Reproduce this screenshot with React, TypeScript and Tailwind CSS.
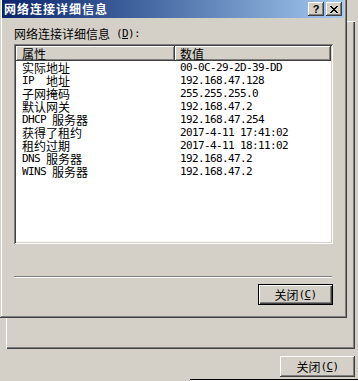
const raised =
  "shadow-[inset_-1px_-1px_#404040,inset_1px_1px_#ffffff,inset_-2px_-2px_#808080,inset_2px_2px_#d4d0c8]";

const rows: [string, string][] = [
  ["实际地址", "00-0C-29-2D-39-DD"],
  ["IP  地址", "192.168.47.128"],
  ["子网掩码", "255.255.255.0"],
  ["默认网关", "192.168.47.2"],
  ["DHCP 服务器", "192.168.47.254"],
  ["获得了租约", "2017-4-11 17:41:02"],
  ["租约过期", "2017-4-11 18:11:02"],
  ["DNS 服务器", "192.168.47.2"],
  ["WINS 服务器", "192.168.47.2"],
];

// SimSun-ish: latin half width (6px), CJK full width (12px)
function Mixed({ text }: { text: string }) {
  const parts = text.split(/([\x00-\x7f]+)/).filter((p) => p !== "");
  return (
    <>
      {parts.map((p, i) =>
        /^[\x00-\x7f]+$/.test(p) ? (
          <span
            key={i}
            className="inline-block align-top h-[13px] leading-[13px] font-['DejaVu_Sans_Mono',monospace] text-[11px] tracking-[-0.62px] whitespace-pre"
          >
            {p}
          </span>
        ) : (
          <span
            key={i}
            className="inline-block align-top h-[13px] leading-[13px] font-['Noto_Sans_CJK_SC',sans-serif] text-[12px]"
          >
            {p}
          </span>
        )
      )}
    </>
  );
}

function Latin({ children }: { children: React.ReactNode }) {
  return (
    <span className="inline-block align-top h-[13px] leading-[13px] font-['DejaVu_Sans_Mono',monospace] text-[11px] tracking-[-0.62px] whitespace-pre">
      {children}
    </span>
  );
}

function CloseLabel() {
  return (
    <span className="flex h-[13px] text-black">
      <Mixed text="关闭" />
      <Latin>
        (<u className="underline-offset-1">C</u>)
      </Latin>
    </span>
  );
}

export default function App() {
  return (
    <div className="relative w-[358px] h-[381px] overflow-hidden bg-[#d4d0c8] font-['Noto_Sans_CJK_SC',sans-serif]">
      {/* window behind */}
      <div className="absolute left-[6px] top-[21px] w-[349px] flex flex-col">
        <div className="h-[328px] shadow-[inset_1px_1px_#ffffff,inset_-1px_-1px_#404040,inset_-2px_-2px_#808080]" />
        <div className="mt-[7px] flex justify-end">
          <button className={`w-[75px] h-[21px] flex items-center justify-center bg-[#d4d0c8] ${raised}`}>
            <CloseLabel />
          </button>
        </div>
      </div>
      <div className="absolute left-[190px] top-[379px] w-[168px] h-[2px] border-t border-black bg-white" />

      {/* details dialog */}
      <div className="absolute left-0 top-0 w-[347px] h-[318px] flex flex-col bg-[#d4d0c8] shadow-[inset_-1px_-1px_#404040,inset_1px_0_#d4d0c8,inset_-2px_-2px_#808080,inset_2px_0_#ffffff]">
        <div className="mx-[2px] mr-[3px] h-[18px] flex items-center justify-between bg-gradient-to-r from-[#0a246a] to-[#a6caf0]">
          <span className="pl-[2px] text-white font-bold text-[12px] tracking-[1px] leading-[14px]">
            网络连接详细信息
          </span>
          <div className="flex items-center gap-[2px] pr-[2px]">
            <div className={`w-[16px] h-[14px] flex items-center justify-center bg-[#d4d0c8] ${raised}`}>
              <span className="font-['Liberation_Sans',sans-serif] font-bold text-[11px] leading-none text-black">?</span>
            </div>
            <div className={`w-[16px] h-[14px] flex items-center justify-center bg-[#d4d0c8] ${raised}`}>
              <svg width="8" height="7" viewBox="0 0 8 7" shapeRendering="crispEdges">
                <path
                  d="M0 0h2v1H0zM6 0h2v1H6zM1 1h2v1H1zM5 1h2v1H5zM2 2h4v1H2zM3 3h2v1H3zM2 4h4v1H2zM1 5h2v1H1zM5 5h2v1H5zM0 6h2v1H0zM6 6h2v1H6z"
                  fill="#000"
                />
              </svg>
            </div>
          </div>
        </div>

        <div className="flex flex-col px-[14px]">
          <div className="mt-[9px] flex h-[13px] text-black">
            <Mixed text="网络连接详细信息 " />
            <Latin>
              (<u className="underline-offset-1">D</u>):
            </Latin>
          </div>

          <div className="mt-[4px] h-[200px] p-[2px] bg-white shadow-[inset_1px_1px_#808080,inset_-1px_-1px_#ffffff,inset_2px_2px_#404040,inset_-2px_-2px_#d4d0c8]">
            <div className="flex h-[15px]">
              <div className={`w-[159px] pl-[6px] leading-[15px] text-[12px] text-black bg-[#d4d0c8] ${raised}`}>属性</div>
              <div className={`flex-1 pl-[5px] leading-[15px] text-[12px] text-black bg-[#d4d0c8] ${raised}`}>数值</div>
            </div>
            <div className="flex flex-col">
              {rows.map(([k, v]) => (
                <div key={k} className="flex h-[13px] text-black">
                  <div className="w-[159px] pl-[6px] flex">
                    <Mixed text={k} />
                  </div>
                  <div className="flex-1 pl-[5px] flex">
                    <Latin>{v}</Latin>
                  </div>
                </div>
              ))}
            </div>
          </div>

          <div className="mt-[32px] h-[2px] mr-[1px] border-t border-[#808080] bg-white" />
          <div className="mt-[6px] flex justify-end">
            <button className="w-[75px] h-[21px] flex items-center justify-center bg-[#d4d0c8] border border-black shadow-[inset_1px_1px_#ffffff,inset_-1px_-1px_#404040,inset_-2px_-2px_#808080]">
              <CloseLabel />
            </button>
          </div>
        </div>
      </div>
    </div>
  );
}
